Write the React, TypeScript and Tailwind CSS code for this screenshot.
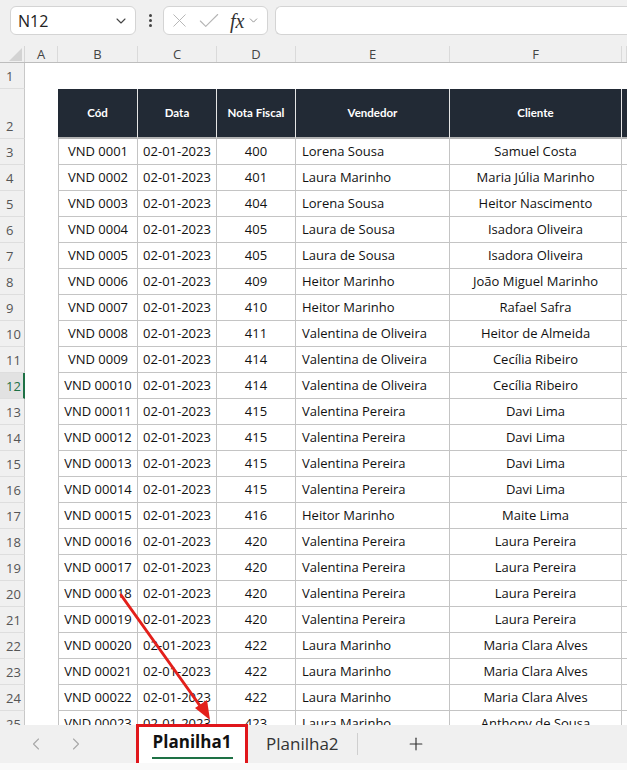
import { ChevronDown, ChevronLeft, ChevronRight, Plus, X, Check } from "lucide-react";

const rows: [string, string, string, string][] = [
  ["VND 0001", "400", "Lorena Sousa", "Samuel Costa"],
  ["VND 0002", "401", "Laura Marinho", "Maria Júlia Marinho"],
  ["VND 0003", "404", "Lorena Sousa", "Heitor Nascimento"],
  ["VND 0004", "405", "Laura de Sousa", "Isadora Oliveira"],
  ["VND 0005", "405", "Laura de Sousa", "Isadora Oliveira"],
  ["VND 0006", "409", "Heitor Marinho", "João Miguel Marinho"],
  ["VND 0007", "410", "Heitor Marinho", "Rafael Safra"],
  ["VND 0008", "411", "Valentina de Oliveira", "Heitor de Almeida"],
  ["VND 0009", "414", "Valentina de Oliveira", "Cecília Ribeiro"],
  ["VND 00010", "414", "Valentina de Oliveira", "Cecília Ribeiro"],
  ["VND 00011", "415", "Valentina Pereira", "Davi Lima"],
  ["VND 00012", "415", "Valentina Pereira", "Davi Lima"],
  ["VND 00013", "415", "Valentina Pereira", "Davi Lima"],
  ["VND 00014", "415", "Valentina Pereira", "Davi Lima"],
  ["VND 00015", "416", "Heitor Marinho", "Maite Lima"],
  ["VND 00016", "420", "Valentina Pereira", "Laura Pereira"],
  ["VND 00017", "420", "Valentina Pereira", "Laura Pereira"],
  ["VND 00018", "420", "Valentina Pereira", "Laura Pereira"],
  ["VND 00019", "420", "Valentina Pereira", "Laura Pereira"],
  ["VND 00020", "422", "Laura Marinho", "Maria Clara Alves"],
  ["VND 00021", "422", "Laura Marinho", "Maria Clara Alves"],
  ["VND 00022", "422", "Laura Marinho", "Maria Clara Alves"],
  ["VND 00023", "423", "Laura Marinho", "Anthony de Sousa"],
];

const grid = "grid grid-cols-[25px_33px_80px_79px_79px_154px_172px_1fr]";
const ui = "font-['Open_Sans',sans-serif]";
const cellFont = "font-['Open_Sans',sans-serif] text-[13px] text-[#111]";

const RowHead = ({ n, active }: { n: number; active?: boolean }) => (
  <div
    className={`flex items-end pb-[2px] pl-[6px] border-b border-[#dedede] text-[13px] ${ui} ${
      active ? "bg-[#e2e2e2] text-[#1e7145] border-r-2 border-r-[#1e7145]" : "bg-[#f0f0f0] text-[#555] border-r border-r-[#c8c8c8]"
    }`}
  >
    {n}
  </div>
);

const App = () => {
  return (
    <div className="relative w-[627px] h-[770px] overflow-hidden bg-white flex flex-col">
      {/* top bar */}
      <div className={`h-[46px] shrink-0 bg-[#f0f0f0] flex items-start pt-[6px] pl-[10px] ${ui}`}>
        <div className="w-[126px] h-[29px] bg-white border border-[#d4d4d4] rounded-[6px] flex items-center justify-between pl-[7px] pr-[6px]">
          <span className="text-[16px] text-[#222]">N12</span>
          <ChevronDown size={16} strokeWidth={1.6} className="text-[#444]" />
        </div>
        <div className="ml-[4px] w-[20px] h-[29px] flex flex-col items-center justify-center gap-[2px]">
          <span className="w-[3px] h-[3px] rounded-full bg-[#444]" />
          <span className="w-[3px] h-[3px] rounded-full bg-[#444]" />
          <span className="w-[3px] h-[3px] rounded-full bg-[#444]" />
        </div>
        <div className="ml-[3px] w-[105px] h-[29px] bg-white border border-[#d4d4d4] rounded-[6px] flex items-center pl-[4px]">
          <X size={23} strokeWidth={1} className="text-[#b5b5b5]" />
          <Check size={26} strokeWidth={1} className="text-[#b5b5b5] ml-[5px]" />
          <span className="ml-[8px] font-['Liberation_Serif',serif] italic text-[20px] text-[#333] leading-none">fx</span>
          <ChevronDown size={13} strokeWidth={1.4} className="text-[#777] ml-[3px]" />
        </div>
        <div className="ml-[7px] flex-1 h-[29px] bg-white border border-[#d4d4d4] rounded-l-[6px] border-r-0" />
      </div>

      {/* sheet */}
      <div className="flex-1 overflow-hidden">
        {/* column headers */}
        <div className={`${grid} h-[17px] bg-[#f0f0f0] border-b border-[#bdbdbd] text-[13px] text-[#444] ${ui}`}>
          <div className="relative border-r border-[#d6d6d6]">
            <div className="absolute right-[2px] bottom-[1px] w-0 h-0 border-l-[13px] border-l-transparent border-b-[13px] border-b-[#d3d3d3]" />
          </div>
          {["A", "B", "C", "D", "E", "F", ""].map((c, i) => (
            <div key={i} className="flex items-center justify-center leading-none border-r border-[#dadada]">
              {c}
            </div>
          ))}
        </div>

        {/* row 1 */}
        <div className={`${grid} h-[26px]`}>
          <RowHead n={1} />
        </div>

        {/* row 2 - table header */}
        <div className={`${grid} h-[50px]`}>
          <RowHead n={2} />
          <div />
          {["Cód", "Data", "Nota Fiscal", "Vendedor", "Cliente", ""].map((h, i) => (
            <div
              key={i}
              className={`bg-[#222a35] border-b-2 border-b-[#b3b3b3] flex items-center justify-center text-white font-bold text-[11.5px] font-['Lato',sans-serif] ${
                i < 5 ? "border-r border-r-[#e5e5e5]" : ""
              }`}
            >
              {h}
            </div>
          ))}
        </div>

        {/* data rows */}
        {rows.map((r, i) => (
          <div key={i} className={`${grid} h-[26px]`}>
            <RowHead n={i + 3} active={i + 3 === 12} />
            <div />
            <div className={`border-l border-r border-b border-[#c4c4c4] flex items-center justify-center whitespace-nowrap ${cellFont}`}>{r[0]}</div>
            <div className={`border-r border-b border-[#c4c4c4] flex items-center justify-center ${cellFont}`}>02-01-2023</div>
            <div className={`border-r border-b border-[#c4c4c4] flex items-center justify-center ${cellFont}`}>{r[1]}</div>
            <div className={`border-r border-b border-[#c4c4c4] flex items-center pl-[6px] whitespace-nowrap ${cellFont}`}>{r[2]}</div>
            <div className={`border-r border-b border-[#c4c4c4] flex items-center justify-center whitespace-nowrap ${cellFont}`}>{r[3]}</div>
            <div className="border-b border-[#c4c4c4]" />
          </div>
        ))}
      </div>

      {/* bottom tabs */}
      <div className={`h-[38px] shrink-0 bg-[#f0f0f0] flex items-center ${ui}`}>
        <ChevronLeft size={20} strokeWidth={1.3} className="text-[#a8a8a8] ml-[26px]" />
        <ChevronRight size={20} strokeWidth={1.3} className="text-[#a8a8a8] ml-[20px]" />
        <div className="ml-[50px] w-[112px] h-[42px] mt-[1px] bg-white border-[3px] border-[#e0161b] flex flex-col items-center justify-center">
          <span className="text-[17px] font-bold text-[#111] leading-none mt-[2px]">Planilha1</span>
          <span className="w-[81px] h-[2px] bg-[#1e7145] mt-[7px]" />
        </div>
        <span className="ml-[18px] text-[17px] text-[#333]">Planilha2</span>
        <span className="ml-[18px] w-px h-[22px] bg-[#cfcfcf]" />
        <Plus size={20} strokeWidth={1.4} className="text-[#333] ml-[48px]" />
      </div>
      <div className="h-[7px] shrink-0 bg-[#f9f9f9]" />

      {/* annotation arrow */}
      <svg className="absolute inset-0 pointer-events-none" width="627" height="770">
        <line x1="121" y1="595" x2="203" y2="710" stroke="#e3201b" strokeWidth="3" strokeLinecap="round" />
        <polygon points="210,720 195,708 207,700" fill="#e3201b" />
      </svg>
    </div>
  );
};

export default App;
